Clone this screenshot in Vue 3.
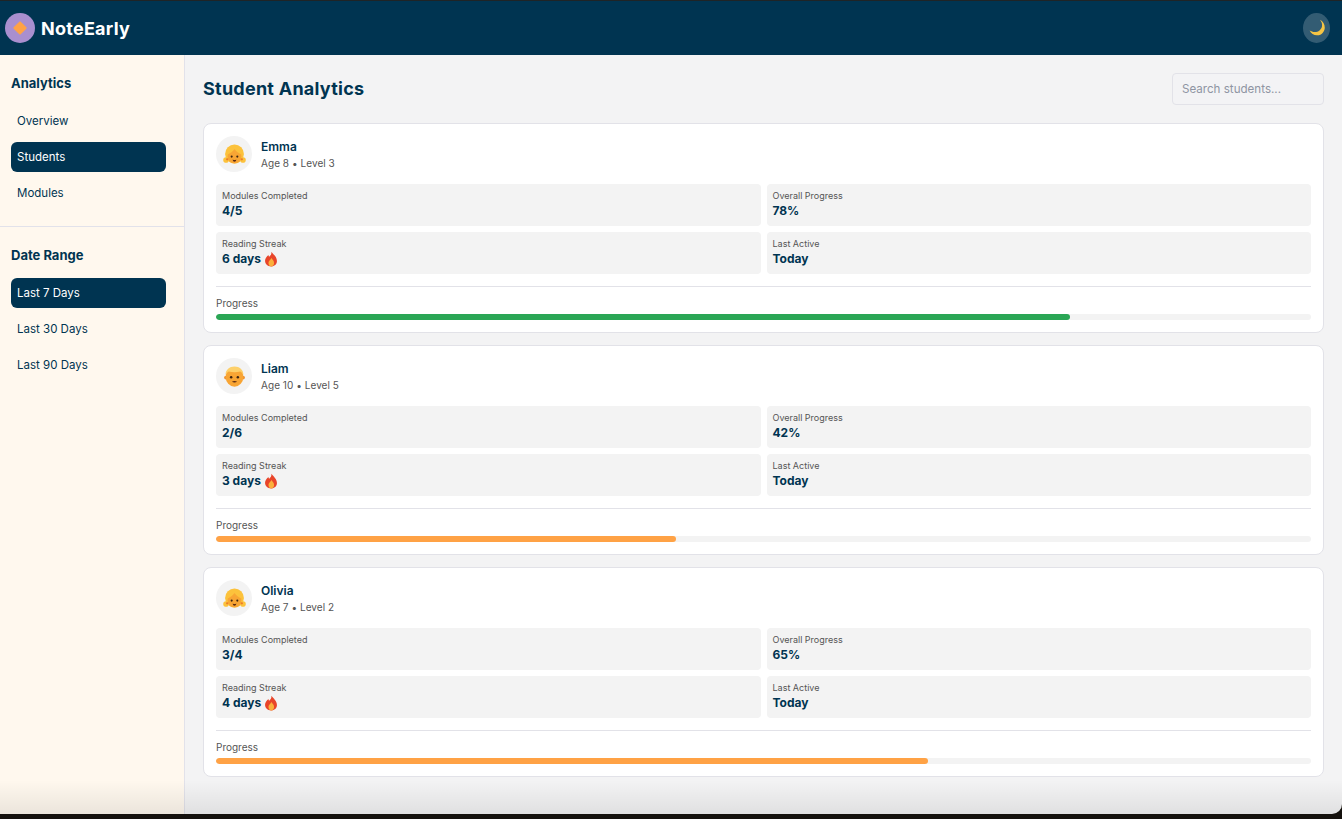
<template>
  <div class="window">
    <div class="app">
      <header class="topbar">
        <div class="brand">
          <span class="logo"><span class="diamond"></span></span>
          <span class="brand-name">NoteEarly</span>
        </div>
        <button class="theme-btn" aria-label="Toggle theme">
          <svg width="20" height="20" viewBox="0 0 18 18">
            <path d="M11.6 1.6c1.500 1.600 2.300 3.600 1.900 5.800-.5 3.100-3.400 5.400-6.600 5.300-1.600 0-3.200-.6-4.500-1.400 1.200 2.900 4.100 4.600 7.100 4.300 3.600-.3 6.400-3.300 6.500-6.900.1-3-1.700-5.800-4.400-7.100z" fill="#f6c544" />
          </svg>
        </button>
      </header>

      <div class="body">
        <aside class="sidebar">
          <section v-for="group in groups" :key="group.title" class="side-group">
            <h3>{{ group.title }}</h3>
            <a v-for="item in group.items" :key="item" class="side-item" :class="{ active: item === group.active }">{{ item }}</a>
          </section>
        </aside>

        <main class="content">
          <div class="content-head">
            <h1>Student Analytics</h1>
            <input class="search" type="text" placeholder="Search students..." />
          </div>

          <article v-for="s in students" :key="s.name" class="card">
            <div class="student">
              <div class="avatar">
                <svg v-if="s.kind === 'girl'" width="23" height="21" viewBox="0 0 22 20">
                  <circle cx="11" cy="9.500" r="9" fill="#fcc23c" />
                  <circle cx="2.900" cy="15.300" r="2.700" fill="#fcc23c" />
                  <circle cx="19.100" cy="15.300" r="2.700" fill="#fcc23c" />
                  <ellipse cx="11" cy="11.800" rx="6.600" ry="6.800" fill="#f8a534" />
                  <path d="M11 4.600C9.500 7.300 7 9 4.200 10.200 4 5.400 7 2.200 11 2.200s7 3.200 6.800 8C15 9 12.500 7.300 11 4.600z" fill="#fcc23c" />
                  <circle cx="8.300" cy="12" r="1" fill="#3d2410" />
                  <circle cx="13.700" cy="12" r="1" fill="#3d2410" />
                  <path d="M9.300 14.800c1.100.7 2.300.7 3.400 0-.1 1.400-.8 2.100-1.700 2.100s-1.600-.7-1.700-2.100z" fill="#5a2a12" />
                  <circle cx="4" cy="14.600" r="1.100" fill="#ec7a2a" />
                  <circle cx="18" cy="14.600" r="1.100" fill="#ec7a2a" />
                </svg>
                <svg v-else width="25" height="25" viewBox="0 0 24 24">
                  <circle cx="3.800" cy="13" r="1.800" fill="#ee9232" />
                  <circle cx="20.200" cy="13" r="1.800" fill="#ee9232" />
                  <ellipse cx="12" cy="12.300" rx="8.500" ry="9.500" fill="#f8a534" />
                  <path d="M3.400 10.500C3.500 5.500 7.200 2.500 12 2.500s8.500 3 8.600 8c-.8-1.400-1.700-2.600-3-3.300-3.600 1-7.600 1-11.200 0-1.300.7-2.200 1.900-3 3.300z" fill="#fdd06a" />
                  <circle cx="8.800" cy="12.800" r="1.200" fill="#3d2410" />
                  <circle cx="15.200" cy="12.800" r="1.200" fill="#3d2410" />
                  <path d="M9.500 17c1.600-.9 3.400-.9 5 0-1.500 1-3.500 1-5 0z" fill="#5a2a12" />
                </svg>
              </div>
              <div class="who">
                <div class="name">{{ s.name }}</div>
                <div class="meta">Age {{ s.age }} • Level {{ s.level }}</div>
              </div>
            </div>

            <div class="stats">
              <div class="stat">
                <div class="stat-label">Modules Completed</div>
                <div class="stat-value">{{ s.modules }}</div>
              </div>
              <div class="stat">
                <div class="stat-label">Overall Progress</div>
                <div class="stat-value">{{ s.progress }}%</div>
              </div>
              <div class="stat">
                <div class="stat-label">Reading Streak</div>
                <div class="stat-value streak">
                  {{ s.streak }} days
                  <svg width="16" height="16" viewBox="0 0 14 14">
                    <path d="M7.300.6c.4 2.200-.8 3.300-1.900 4.400-.4-.5-.6-1-.6-1.600C3 4.800 1.800 6.600 1.800 8.600c0 2.900 2.300 4.900 5.200 4.900s5.200-2 5.200-4.800c0-3.600-3-5.600-4.900-8.100z" fill="#e8452a" />
                    <path d="M7.200 6c.2 1.400-2.400 2.400-2.400 4.600 0 1.700 1 2.900 2.300 2.900s2.600-1.200 2.600-3c0-2-1.800-3-2.500-4.500z" fill="#fbb03b" />
                  </svg>
                </div>
              </div>
              <div class="stat">
                <div class="stat-label">Last Active</div>
                <div class="stat-value">Today</div>
              </div>
            </div>

            <div class="progress">
              <div class="progress-label">Progress</div>
              <div class="track">
                <div class="fill" :class="{ high: s.progress >= 70 }" :style="{ width: s.progress + '%' }"></div>
              </div>
            </div>
          </article>
        </main>
      </div>
      <div class="bottom-shade"></div>
    </div>
  </div>
</template>

<script setup>
const groups = [
  { title: 'Analytics', items: ['Overview', 'Students', 'Modules'], active: 'Students' },
  { title: 'Date Range', items: ['Last 7 Days', 'Last 30 Days', 'Last 90 Days'], active: 'Last 7 Days' }
]

const students = [
  { name: 'Emma', age: 8, level: 3, kind: 'girl', modules: '4/5', progress: 78, streak: 6 },
  { name: 'Liam', age: 10, level: 5, kind: 'boy', modules: '2/6', progress: 42, streak: 3 },
  { name: 'Olivia', age: 7, level: 2, kind: 'girl', modules: '3/4', progress: 65, streak: 4 }
]
</script>

<style>
body {
  background: #14110d;
}
</style>

<style scoped>
.window {
  height: 819px;
  overflow: hidden;
  background: #14110d;
  font-family: Inter, "Liberation Sans", sans-serif;
  color: #003451;
}

.app {
  position: relative;
  height: 814px;
  display: flex;
  flex-direction: column;
  overflow: hidden;
  background: #f3f3f4;
  border-bottom-right-radius: 10px;
}

.topbar {
  height: 55px;
  box-sizing: border-box;
  flex: none;
  display: flex;
  align-items: center;
  justify-content: space-between;
  padding: 0 12px 0 5px;
  background: #003451;
  border-top: 1px solid #1f2426;
}

.brand {
  display: flex;
  align-items: center;
  gap: 6px;
}

.logo {
  width: 30px;
  height: 30px;
  border-radius: 50%;
  background: #a98fcf;
  display: flex;
  align-items: center;
  justify-content: center;
}

.diamond {
  width: 10px;
  height: 10px;
  background: #ffa245;
  transform: rotate(45deg);
  border-radius: 1px;
}

.brand-name {
  font-size: 18px;
  font-weight: 700;
  letter-spacing: 0.25px;
  color: #fff;
}

.theme-btn {
  width: 27px;
  height: 30px;
  padding: 0;
  border: none;
  border-radius: 50%;
  background: rgba(255, 255, 255, 0.2);
  display: flex;
  align-items: center;
  justify-content: center;
}

.body {
  flex: 1;
  display: flex;
  min-height: 0;
}

.sidebar {
  width: 185px;
  flex: none;
  box-sizing: border-box;
  background: #fff8ee;
  border-right: 1px solid #e2e2ea;
}

.side-group {
  padding: 20px 18px 18px 11px;
  display: flex;
  flex-direction: column;
  gap: 6px;
}

.side-group + .side-group {
  border-top: 1px solid #e2e2ea;
}

.side-group h3 {
  margin: 0 0 8px;
  font-size: 13px;
  line-height: 17px;
  font-weight: 700;
}

.side-item {
  height: 30px;
  padding: 0 6px;
  display: flex;
  align-items: center;
  border-radius: 6px;
  font-size: 11.5px;
}

.side-item.active {
  background: #003451;
  color: #fff;
}

.content {
  flex: 1;
  min-width: 0;
  padding: 18px 18px 0;
}

.content-head {
  height: 32px;
  margin-bottom: 18px;
  display: flex;
  align-items: center;
  justify-content: space-between;
}

.content-head h1 {
  margin: 0 0 2px;
  font-size: 18px;
  font-weight: 700;
  letter-spacing: 0.25px;
}

.search {
  width: 152px;
  height: 32px;
  box-sizing: border-box;
  padding: 0 9px;
  border: 1px solid #e2e2e8;
  border-radius: 4px;
  background: #f3f3f5;
  font: 11.6px Inter, sans-serif;
  outline: none;
}

.search::placeholder {
  color: #8f95a3;
}

.card {
  margin-bottom: 12px;
  padding: 12px;
  background: #fff;
  border: 1px solid #e2e2e8;
  border-radius: 8px;
}

.student {
  display: flex;
  align-items: center;
  gap: 9px;
  margin-bottom: 12px;
}

.avatar {
  width: 36px;
  height: 36px;
  border-radius: 50%;
  background: #f3f3f3;
  display: flex;
  align-items: center;
  justify-content: center;
}

.who {
  padding-top: 1px;
}

.name {
  font-size: 12px;
  line-height: 16px;
  font-weight: 600;
}

.meta {
  margin-top: 1px;
  font-size: 10px;
  line-height: 14px;
  letter-spacing: 0.05px;
  color: #555;
}

.stats {
  display: grid;
  grid-template-columns: 1fr 1fr;
  gap: 6px;
}

.stat {
  height: 42px;
  box-sizing: border-box;
  padding: 6px;
  background: #f3f3f3;
  border-radius: 4px;
}

.stat-label {
  font-size: 9px;
  line-height: 12px;
  color: #555;
}

.stat-value {
  margin-top: 1px;
  font-size: 12px;
  line-height: 16px;
  font-weight: 700;
}

.streak {
  display: flex;
  align-items: center;
  gap: 2px;
}

.progress {
  margin-top: 12px;
  padding-top: 10px;
  border-top: 1px solid #e2e2e8;
}

.progress-label {
  font-size: 10px;
  line-height: 13px;
  color: #555;
  margin-bottom: 4px;
}

.track {
  height: 6px;
  background: #f3f3f3;
  border-radius: 3px;
  overflow: hidden;
}

.fill {
  height: 100%;
  background: #ffa245;
  border-radius: 3px;
}

.fill.high {
  background: #2aa655;
}

.bottom-shade {
  position: absolute;
  left: 0;
  right: 0;
  bottom: 0;
  height: 34px;
  pointer-events: none;
  background: linear-gradient(to bottom, rgba(0, 0, 0, 0), rgba(0, 0, 0, 0.08));
}
</style>
